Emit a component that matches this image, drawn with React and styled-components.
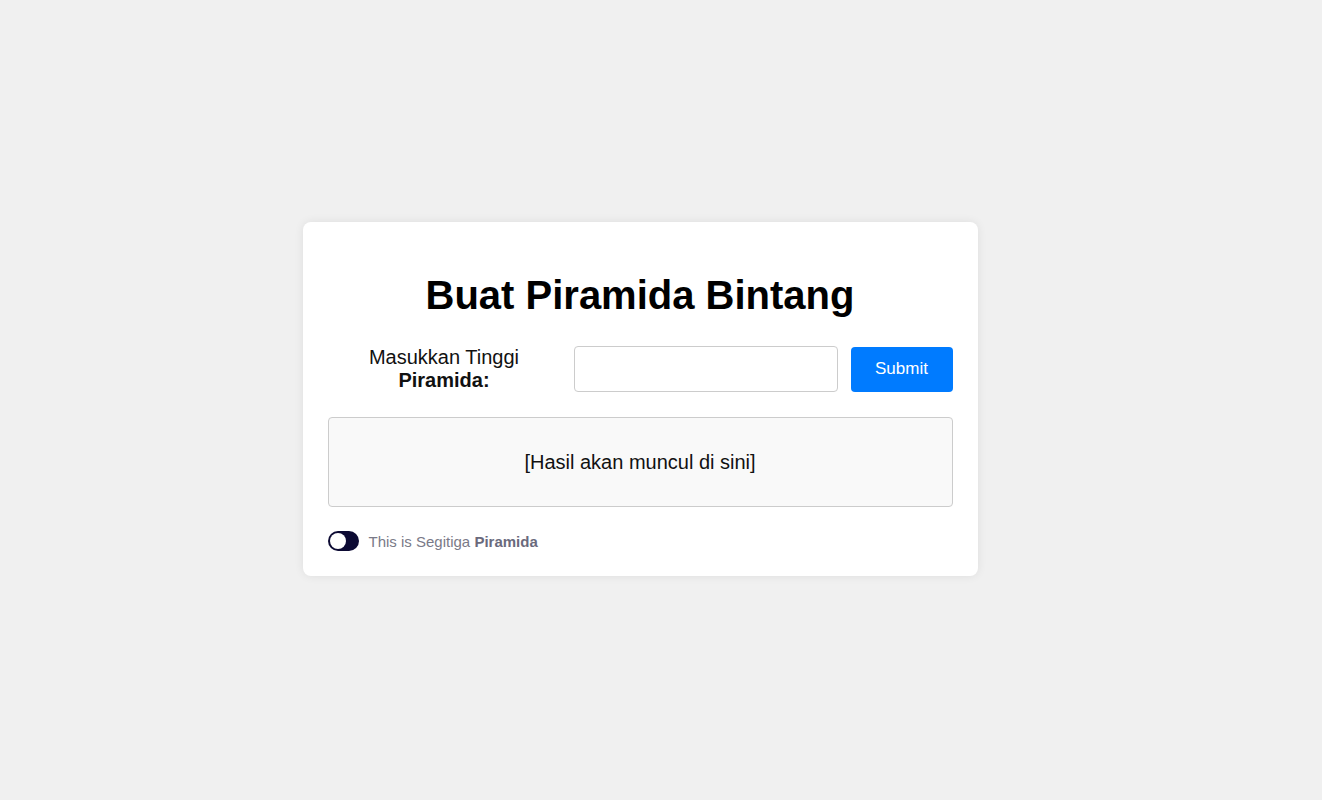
import React, { useState } from "react";
import styled, { createGlobalStyle } from "styled-components";

const GlobalStyle = createGlobalStyle`
  html, body {
    margin: 0;
    padding: 0;
    background: #f0f0f0;
    font-family: "Liberation Sans", Arial, sans-serif;
  }
`;

const Page = styled.div`
  min-height: 800px;
  box-sizing: border-box;
  padding-right: 42px;
  display: flex;
  align-items: center;
  justify-content: center;
`;

const Card = styled.div`
  width: 625px;
  padding: 25px;
  background: #fff;
  border-radius: 8px;
  box-shadow: 0 0 10px rgba(0, 0, 0, 0.08);
  margin-top: -2px;
`;

const Title = styled.h1`
  font-size: 40px;
  font-weight: bold;
  text-align: center;
  color: #000;
  margin: 26px 0 28px;
`;

const FormRow = styled.div`
  display: flex;
  align-items: center;
  gap: 13px;
`;

const Label = styled.label`
  width: 233px;
  flex-shrink: 0;
  text-align: center;
  font-size: 20px;
  line-height: 23px;
  color: #111;
`;

const Input = styled.input`
  width: 264px;
  height: 46px;
  box-sizing: border-box;
  border: 1px solid #ccc;
  border-radius: 4px;
  padding: 0 10px;
  font-size: 18px;
  font-family: inherit;
  outline: none;
`;

const Button = styled.button`
  width: 102px;
  height: 45px;
  border: none;
  border-radius: 4px;
  background: #007bff;
  color: #fff;
  font-size: 17px;
  font-family: inherit;
  cursor: pointer;
`;

const Output = styled.div`
  margin-top: 25px;
  height: 90px;
  box-sizing: border-box;
  border: 1px solid #ccc;
  border-radius: 4px;
  background: #f9f9f9;
  display: flex;
  align-items: center;
  justify-content: center;
  font-size: 20px;
  color: #111;
`;

const ToggleRow = styled.div`
  margin-top: 24px;
  display: flex;
  align-items: center;
  gap: 10px;
`;

const Switch = styled.button`
  width: 31px;
  height: 20px;
  border: none;
  border-radius: 10px;
  background: #0c0a33;
  padding: 0;
  position: relative;
  cursor: pointer;
`;

const Knob = styled.span`
  position: absolute;
  top: 2px;
  left: ${(p) => (p.$on ? "13px" : "2px")};
  width: 16px;
  height: 16px;
  border-radius: 50%;
  background: #fff;
`;

const ToggleText = styled.span`
  font-size: 15px;
  color: #7a7a88;

  b {
    color: #6a6a7c;
  }
`;

export default function App() {
  const [on, setOn] = useState(false);
  const [height, setHeight] = useState("");

  return (
    <Page>
      <GlobalStyle />
      <Card>
        <Title>Buat Piramida Bintang</Title>
        <FormRow>
          <Label>
            Masukkan Tinggi <b>Piramida:</b>
          </Label>
          <Input
            type="number"
            value={height}
            onChange={(e) => setHeight(e.target.value)}
          />
          <Button>Submit</Button>
        </FormRow>
        <Output>[Hasil akan muncul di sini]</Output>
        <ToggleRow>
          <Switch onClick={() => setOn((pre) => !pre)}>
            <Knob $on={on} />
          </Switch>
          <ToggleText>
            This is Segitiga <b>Piramida</b>
          </ToggleText>
        </ToggleRow>
      </Card>
    </Page>
  );
}
